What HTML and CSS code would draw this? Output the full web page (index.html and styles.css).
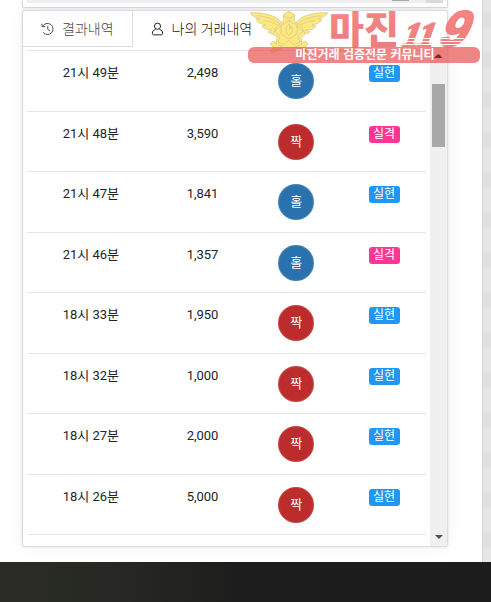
FILE: index.html
```html
<!DOCTYPE html>
<html lang="ko">
<head>
  <meta charset="UTF-8">
  <title>나의 거래내역</title>
  <meta name="viewport" content="width=device-width, initial-scale=1.0">
  <link rel="stylesheet" href="styles.css">
</head>
<body>
  <div class="page">
    <main class="content">
      <section class="chart-end">
        <div class="hscroll"><span class="hscroll-thumb"></span><span class="hscroll-corner"></span></div>
      </section>

      <section class="card">
        <nav class="tabs">
          <button class="tab" type="button">
            <svg class="tab-icon" viewBox="0 0 14 14" fill="none" stroke="currentColor">
              <path d="M1.6 4.3A6 6 0 1 1 2.2 10.600M.8 1.300l.5 3.300 3.400-.2M7.300 3.600v3.800l2.400 1.800"/>
            </svg>
            <span>결과내역</span>
          </button>
          <button class="tab active" type="button">
            <svg class="tab-icon" viewBox="0 0 14 14" fill="none" stroke="currentColor">
              <circle cx="7" cy="4" r="3.300"/>
              <path d="M4.800 7.500C2.400 8.200 1.500 9.500 1.500 11.500c0 1.200.5 1.800 1.500 1.800h8c1 0 1.500-.6 1.500-1.800 0-2-.9-3.300-3.300-4"/>
            </svg>
            <span>나의 거래내역</span>
          </button>
        </nav>

        <div class="panel">
          <div class="list">
            <table class="trades">
              <tbody>
                <tr><td>21시 49분</td><td>2,498</td><td><span class="ball odd">홀</span></td><td><span class="badge win">실현</span></td></tr>
                <tr><td>21시 48분</td><td>3,590</td><td><span class="ball even">짝</span></td><td><span class="badge lose">실격</span></td></tr>
                <tr><td>21시 47분</td><td>1,841</td><td><span class="ball odd">홀</span></td><td><span class="badge win">실현</span></td></tr>
                <tr><td>21시 46분</td><td>1,357</td><td><span class="ball odd">홀</span></td><td><span class="badge lose">실격</span></td></tr>
                <tr><td>18시 33분</td><td>1,950</td><td><span class="ball even">짝</span></td><td><span class="badge win">실현</span></td></tr>
                <tr><td>18시 32분</td><td>1,000</td><td><span class="ball even">짝</span></td><td><span class="badge win">실현</span></td></tr>
                <tr><td>18시 27분</td><td>2,000</td><td><span class="ball even">짝</span></td><td><span class="badge win">실현</span></td></tr>
                <tr><td>18시 26분</td><td>5,000</td><td><span class="ball even">짝</span></td><td><span class="badge win">실현</span></td></tr>
              </tbody>
            </table>
          </div>
          <div class="vscroll">
            <span class="arrow up"></span>
            <span class="vscroll-thumb"></span>
            <span class="arrow down"></span>
          </div>
        </div>
      </section>
    </main>
    <aside class="side"></aside>
  </div>
  <footer class="footer"></footer>

  <!-- logo over the card -->
  <svg class="logo" viewBox="0 0 232 56">
    <defs>
      <linearGradient id="red" x1="0" y1="0" x2="0" y2="1">
        <stop offset="0" stop-color="#ff7f7f"/>
        <stop offset="1" stop-color="#e27878"/>
      </linearGradient>
    </defs>
    <g fill="#fde777" stroke="#cfc48c" stroke-width=".7" stroke-linejoin="round">
      <path d="M2 5c9-1 19 1 25 4 4 2 6 4 8 7l-3 9c-6 2-9 1-12-1l4-2c-5 0-8-1-10-4l4-1C12 16 9 14 8 11l4 0C7 9 4 8 2 5z"/>
      <path d="M80 5c-9-1-19 1-25 4-4 2-6 4-8 7l3 9c6 2 9 1 12-1l-4-2c5 0 8-1 10-4l-4-1c6-1 9-3 10-6l-4 0c5-2 8-3 10-6z"/>
      <path d="M9 8c9 0 17 3 23 8M15 13c6 0 10 1 16 5M73 8c-9 0-17 3-23 8M67 13c-6 0-10 1-16 5" fill="none"/>
      <path d="M25 33l9 5-1 3-9 4-2-2 4-3-4-4zM57 33l-9 5 1 3 9 4 2-2-4-3 4-4z"/>
      <path d="M35 7l3-2 3-2 3 2 3 2-1 6 8 6 3 7-4 4 1 6-7 3-6 1-6-1-7-3 1-6-4-4 3-7 8-6z"/>
      <path d="M41 13l8 4v9l-8 5-8-5v-9zM33 18l-6 5 5 5M49 18l6 5-5 5M32 28l-2 6 6 3 5-5 5 5 6-3-2-6"/>
      <path d="M41 16c-4 4-4 9 0 11 4-2 4-7 2-9l-1 3zM36 8l4 2h3l3-2M39 11l2 2 2-2" fill="none"/>
    </g>
    <text class="logo-name" x="81" y="35" fill="url(#red)">마진</text>
    <g fill="url(#red)" stroke="#f07c7c">
      <text class="logo-num" transform="translate(152 38) skewX(-20)">11</text>
      <text class="logo-nine" transform="translate(188 38) skewX(-24)">9</text>
    </g>
    <path d="M150 30.500h66M150 33.500h66M150 36.500h66" stroke="#fff" stroke-width="1"/>
    <rect y="39" width="232" height="16" rx="6" fill="#e84848" fill-opacity=".7"/>
    <text class="logo-slogan" x="117" y="51" text-anchor="middle" fill="#fff">마진거래 검증전문 커뮤니티</text>
    <path d="M186 50l4-4 4 4z" fill="#8c2020"/>
  </svg>
</body>
</html>
```
FILE: styles.css
```css
* {
  box-sizing: border-box;
}
body {
  margin: 0;
  min-height: 100vh;
  display: flex;
  flex-direction: column;
  font-family: Roboto, "Noto Sans CJK KR", sans-serif;
  font-size: 13px;
  color: #212529;
  background-color: #fff;
}
.page {
  flex: 1;
  display: flex;
}
.content {
  flex: 1;
  display: flex;
  flex-direction: column;
  gap: 2px;
  padding: 0 34px 15px 22px;
}
.side {
  width: 9px;
  border-left: 1px solid #d2d2d2;
  background: radial-gradient(circle at 4px 20px, #e0e0e0 8px, #e6e6e6 9px) 0 0 / 9px 40px;
}
.footer {
  height: 40px;
  background: linear-gradient(90deg, #2a2c25, #272823 25%, #1d1d1d 48%, #1c1c1c);
}

.chart-end {
  height: 8px;
  padding: 0 4px;
  border: 1px solid #d9d9e0;
  border-top: none;
  border-radius: 0 0 2px 2px;
  box-shadow: 0 0 3px rgba(0, 0, 0, .12);
}
.hscroll {
  display: flex;
  justify-content: flex-end;
  gap: 17px;
  height: 3px;
  background-color: #f0f0f0;
}
.hscroll-thumb {
  width: 17px;
  height: 1px;
  background-color: #a8a8a8;
}
.hscroll-corner {
  width: 17px;
  background-color: #dcdcdc;
}

.card {
  flex: 1;
  display: flex;
  flex-direction: column;
  border: 1px solid #dcdce2;
  border-radius: 3px;
  background-color: #fff;
  box-shadow: 0 0 2px rgba(0, 0, 0, .15), 0 0 18px rgba(0, 0, 0, .05);
}
.tabs {
  display: flex;
  height: 36px;
}
.tab {
  display: flex;
  align-items: center;
  gap: 8px;
  padding: 0 18px;
  border: none;
  background: none;
  font-family: inherit;
  font-size: 14px;
  font-weight: 300;
  line-height: 20px;
  color: #444;
  cursor: pointer;
  white-space: nowrap;
}
.tab:first-child {
  border-right: 1px solid #dedee2;
  border-bottom: 1px solid #dedee2;
}
.tab.active {
  color: #111;
}
.tab-icon {
  width: 13px;
  height: 14px;
}

.panel {
  flex: 1;
  display: flex;
}
.list {
  flex: 1;
  padding: 3px 4px 0;
}
.trades {
  width: 100%;
  height: 485px;
  border-collapse: collapse;
  table-layout: fixed;
}
.trades td {
  padding: 12px 0 11px;
  border-top: 1px solid #e4e6e8;
  border-bottom: 1px solid #e4e6e8;
  line-height: 20px;
  text-align: center;
  vertical-align: top;
}
.trades td:nth-child(1) {
  width: 32%;
}
.trades td:nth-child(2) {
  width: 24%;
}
.trades td:nth-child(3) {
  width: 23%;
}
.trades td:nth-child(4) {
  width: 21%;
}
.ball {
  display: block;
  width: 36px;
  margin: 0 auto;
  border-radius: 50%;
  line-height: 36px;
  color: #fff;
  box-shadow: inset 0 0 2px rgba(255, 255, 255, .4);
}
.odd {
  background-color: #2a72ae;
}
.even {
  background-color: #bc2c2c;
}
.badge {
  display: block;
  width: 31px;
  margin: 2px auto 0;
  border-radius: 3px;
  font-size: 12px;
  line-height: 17px;
  color: #fff;
}
.win {
  background-color: #2196f3;
}
.lose {
  background-color: #ff3694;
}

.vscroll {
  display: flex;
  flex-direction: column;
  align-items: center;
  width: 17px;
  padding: 7px 0;
  background-color: #f0f0f0;
}
.vscroll-thumb {
  width: 13px;
  height: 63px;
  margin-top: 26px;
  background-color: #a8a8a8;
}
.arrow {
  border: 4px solid transparent;
}
.up {
  border-top: none;
  border-bottom-color: #505050;
}
.down {
  margin-top: auto;
  border-bottom: none;
  border-top-color: #505050;
}

.logo {
  position: absolute;
  top: 8px;
  right: 11px;
  width: 232px;
  height: 56px;
  overflow: visible;
  opacity: .95;
}
.logo-name {
  font-family: "Noto Sans CJK KR", sans-serif;
  font-size: 38px;
  font-weight: 900;
}
.logo-num {
  font-family: "Liberation Serif", serif;
  font-size: 34px;
  font-weight: bold;
  stroke-width: 2px;
}
.logo-nine {
  font-family: "Liberation Sans", sans-serif;
  font-size: 50px;
  font-weight: bold;
  stroke-width: 2px;
}
.logo-slogan {
  font-family: "Noto Sans CJK KR", sans-serif;
  font-size: 12px;
  font-weight: 700;
}
```
